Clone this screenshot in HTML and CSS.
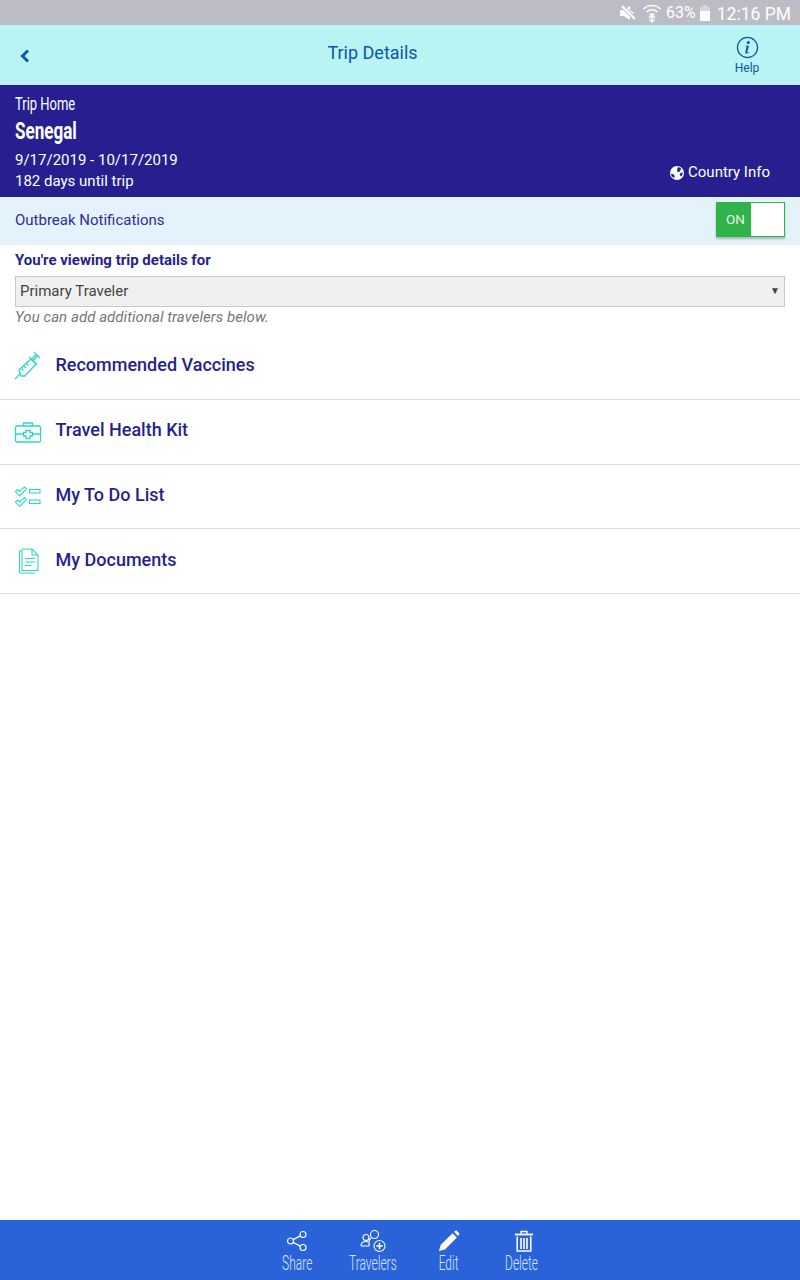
FILE: index.html
```html
<!DOCTYPE html>
<html>

<head>
    <meta name="viewport" content="width=device-width, initial-scale=1.0">
    <link rel="stylesheet" href="styles.css">
</head>

<body>
    <div class="statusbar">
        <svg class="st-mute" viewBox="0 0 18 16" width="18" height="16">
            <path d="M1 5h4l6-4v14l-6-4H1z" fill="#fff" />
            <path d="M11 5l4 3-4 3z" fill="#fff" />
            <path d="M2 0l15 15" stroke="#bdbcc4" stroke-width="4" />
            <path d="M3 1l13 13" stroke="#fff" stroke-width="2.200" />
        </svg>
        <svg class="st-wifi" viewBox="0 0 20 20" width="20" height="20" fill="none" stroke="#fff">
            <path d="M1.500 6a12 12 0 0 1 17 0" stroke-width="1.500" />
            <path d="M4.500 9a8 8 0 0 1 11 0" stroke-width="1.500" />
            <path d="M7.500 12a4 4 0 0 1 5 0" stroke-width="1.500" />
            <path d="M10 12.500v6M7 15l3-3 3 3M7.500 16.500l2.500 2.500 2.500-2.500" stroke-width="1.500" />
        </svg>
        <span class="st-pct">63%</span>
        <svg class="st-batt" viewBox="0 0 10 16" width="10" height="16">
            <path d="M3 0h4v2h3v14H0V2h3z" fill="#d6d6da" />
            <path d="M0 6h10v10H0z" fill="#fff" />
        </svg>
        <span class="st-time">12:16 PM</span>
    </div>

    <div class="topbar">
        <svg class="back" viewBox="0 0 10 14" width="10" height="14">
            <path d="M8 1.500L2.500 7 8 12.500" fill="none" stroke="#0b57a8" stroke-width="3" />
        </svg>
        <div class="topbar-title">Trip Details</div>
        <div class="help">
            <svg viewBox="0 0 24 24" width="23" height="23">
                <circle cx="12" cy="12" r="10.500" fill="none" stroke="#0b57a8" stroke-width="1.300" />
                <circle cx="12.800" cy="6.800" r="1.600" fill="#0b57a8" />
                <path d="M9.800 10.200h3.700l-1.700 6.600c-.1.500.3.600 1.900-.3l.2.500c-1.600 1.300-4.600 2.200-4.300.2l1.300-5.600c.1-.6-.3-.8-1.200-.8z" fill="#0b57a8" />
            </svg>
            <span>Help</span>
        </div>
    </div>

    <div class="trip">
        <div class="trip-home"><span class="narrow">Trip Home</span></div>
        <div class="trip-name"><span class="narrow">Senegal</span></div>
        <div class="trip-line">9/17/2019 - 10/17/2019</div>
        <div class="trip-bottom">
            <div class="trip-line">182 days until trip</div>
            <div class="country">
                <svg viewBox="0 0 16 16" width="14" height="14">
                    <circle cx="8" cy="8" r="8" fill="#fff" />
                    <path d="M9 1.500c1.500 0 3 .5 4 2l-1.500 1.500-1 2-2-.5-.5-2zM1 9c1 0 2.500 0 3.500 1s1 2.500.5 3.500C3 13 1.500 11 1 9zM12 8l2.500-.5c0 2-.7 3.500-2 4.500l-1.500-2z" fill="#271f8f" />
                </svg>
                <span>Country Info</span>
            </div>
        </div>
    </div>

    <div class="outbreak">
        <span>Outbreak Notifications</span>
        <div class="toggle">
            <div class="toggle-on">ON</div>
            <div class="toggle-knob"></div>
        </div>
    </div>

    <div class="viewing">
        <div class="viewing-label">You're viewing trip details for</div>
        <div class="picker">
            <span>Primary Traveler</span>
            <span class="picker-arrow">▼</span>
        </div>
        <div class="viewing-hint">You can add additional travelers below.</div>
    </div>

    <div class="menu">
        <div class="menu-row first">
            <svg viewBox="0 0 28 30" width="28" height="30" class="menu-icon" fill="none" stroke="#2fd6c8" stroke-width="1.300">
                <path d="M1 29l6-6" />
                <path d="M5 20l2 6 4 0 11-12-5-5z" />
                <path d="M7.500 18.500l2 2M10 16l2 2M12.500 13.500l2 2" />
                <path d="M15 7l8 8M19 11l4.500-5M17.500 9.500l4.500-5M20 2l6 6" />
            </svg>
            <span>Recommended Vaccines</span>
        </div>
        <div class="menu-row">
            <svg viewBox="0 0 28 22" width="28" height="22" class="menu-icon" fill="none" stroke="#2fd6c8" stroke-width="1.300">
                <rect x="1.500" y="5" width="25" height="16" rx="1.500" />
                <path d="M9.500 5V2h9v3" />
                <path d="M1.500 13h8M18.500 13h8" />
                <path d="M12 9.500h4V11.500h2.500v3.500H16v2.500h-4V15H9.500v-3.500H12z" />
            </svg>
            <span>Travel Health Kit</span>
        </div>
        <div class="menu-row short">
            <svg viewBox="0 0 28 22" width="28" height="22" class="menu-icon" fill="none" stroke="#2fd6c8" stroke-width="1.100">
                <path d="M1.500 5.500l2-2 2 2 5-4.500 2 2-7 7z" />
                <path d="M1.500 16l2-2 2 2 5-4.500 2 2-7 7z" />
                <rect x="15.500" y="3.500" width="10.500" height="3.500" />
                <rect x="15.500" y="14" width="10.500" height="3.500" />
            </svg>
            <span>My To Do List</span>
        </div>
        <div class="menu-row">
            <svg viewBox="0 0 28 26" width="28" height="26" class="menu-icon" fill="none" stroke="#2fd6c8" stroke-width="1.100">
                <path d="M8 3H5.500v20.500c0 1 .5 1.500 1.500 1.500h14" />
                <path d="M8 1h10l6 6v15.500H8z" />
                <path d="M18 1v6h6" />
                <path d="M11 10.500h10M11 14h10M11 17.500h6" />
            </svg>
            <span>My Documents</span>
        </div>
    </div>

    <div class="spacer"></div>

    <div class="footer">
        <div class="foot-item share">
            <svg viewBox="0 0 22 22" width="22" height="22" fill="none" stroke="#fff" stroke-width="1.200">
                <circle cx="17" cy="4.500" r="3" />
                <circle cx="4.500" cy="11" r="3" />
                <circle cx="17" cy="17.500" r="3" />
                <path d="M7.200 9.600l7.100-3.700M7.200 12.400l7.100 3.700" />
            </svg>
            <span class="narrow">Share</span>
        </div>
        <div class="foot-item travelers">
            <svg viewBox="0 0 26 24" width="26" height="24" fill="none" stroke="#fff" stroke-width="1.100">
                <circle cx="6" cy="8.500" r="3" />
                <path d="M1 17c0-3 2-4.500 5-4.500 1 0 2 .2 2.500.6M1 17h8" />
                <circle cx="14.500" cy="5.500" r="4" />
                <path d="M11 9c-2 2-2.500 5-1.500 8" />
                <circle cx="19.500" cy="17" r="5.500" />
                <path d="M19.500 13.800v6.400M16.300 17h6.400" stroke-width="1.500" />
            </svg>
            <span class="narrow">Travelers</span>
        </div>
        <div class="foot-item edit">
            <svg viewBox="0 0 22 22" width="22" height="22">
                <path d="M1 21l1.600-6L14.500 3.200l4.400 4.400L7 19.400z" fill="#fff" />
                <path d="M16 1.700l1.500-1c.5-.3 1-.3 1.500.2l2 2c.5.500.4 1 .1 1.500l-1.100 1.500z" fill="#fff" />
            </svg>
            <span class="narrow">Edit</span>
        </div>
        <div class="foot-item delete">
            <svg viewBox="0 0 20 22" width="20" height="22" fill="none" stroke="#fff">
                <path d="M1 4.500h18" stroke-width="1.800" />
                <path d="M7 4V1.500h6V4" stroke-width="1.300" />
                <path d="M3.200 6.500v14.500h13.600V6.500" stroke-width="1.500" />
                <path d="M7 8v11M10 8v11M13 8v11" stroke-width="1.600" />
            </svg>
            <span class="narrow">Delete</span>
        </div>
    </div>
</body>

</html>
```

FILE: styles.css
```css
* {
    box-sizing: border-box;
}

body {
    margin: 0;
    height: 1280px;
    display: flex;
    flex-direction: column;
    background-color: white;
    font-family: Roboto, "Liberation Sans", sans-serif;
    overflow: hidden;
}

/* no Oswald here, so squeeze Roboto sideways */
.narrow {
    display: inline-block;
    white-space: nowrap;
}

.statusbar {
    height: 25px;
    display: flex;
    align-items: center;
    justify-content: flex-end;
    padding-right: 9px;
    background-color: #bdbcc4;
    color: white;
}

.st-mute {
    margin-right: 5px;
}

.st-wifi {
    margin-right: 4px;
}

.st-pct {
    font-size: 16px;
    margin-right: 4px;
}

.st-batt {
    margin-right: 7px;
}

.st-time {
    font-size: 17.500px;
    position: relative;
    top: 1px;
}

.topbar {
    height: 60px;
    position: relative;
    display: flex;
    justify-content: center;
    background-color: #baf3f3;
    color: #0b57a8;
}

.back {
    position: absolute;
    left: 20px;
    top: 24px;
}

.topbar-title {
    font-size: 18px;
    line-height: 56px;
    padding-right: 55px;
}

.help {
    position: absolute;
    left: 727px;
    top: 11px;
    width: 40px;
    display: flex;
    flex-direction: column;
    align-items: center;
    font-size: 12px;
    line-height: 14px;
}

.help span {
    margin-top: 2px;
}

.trip {
    height: 112px;
    padding: 8px 30px 0 15px;
    background-color: #271f8f;
    color: white;
}

.trip-home {
    font-size: 18px;
    line-height: 22px;
}

.trip-home .narrow {
    transform: scaleX(0.72);
    transform-origin: left;
}

.trip-name {
    font-size: 24px;
    font-weight: bold;
    line-height: 33px;
    margin-bottom: 2px;
}

.trip-name .narrow {
    transform: scaleX(0.71);
    transform-origin: left;
}

.trip-line {
    font-size: 15px;
    line-height: 21px;
}

.trip-bottom {
    display: flex;
    justify-content: space-between;
    align-items: flex-start;
}

.country {
    display: flex;
    align-items: center;
    gap: 4px;
    font-size: 15px;
    line-height: 21px;
    margin-top: -9px;
}

.outbreak {
    height: 48px;
    display: flex;
    align-items: center;
    justify-content: space-between;
    padding: 0 15px 3px;
    background-color: #e3f2fb;
    color: #332c94;
    font-size: 15px;
}

.toggle {
    width: 69px;
    height: 35px;
    display: flex;
    border: 1px solid #2fb34a;
    box-shadow: 0 2px 2px rgba(0, 0, 0, 0.25);
}

.toggle-on {
    width: 34px;
    background-color: #2fb34a;
    color: #e8f7ea;
    font-size: 13.500px;
    line-height: 33px;
    padding-left: 9px;
}

.toggle-knob {
    flex: 1;
    background-color: white;
}

.viewing {
    padding: 7px 15px 0;
}

.viewing-label {
    color: #271f8f;
    font-size: 15px;
    font-weight: bold;
    line-height: 16px;
}

.picker {
    height: 31px;
    margin-top: 8px;
    display: flex;
    align-items: center;
    justify-content: space-between;
    padding: 0 4px 2px;
    background-color: #f0f0f0;
    border: 1px solid #c8c8c8;
    color: #444;
    font-size: 15px;
}

.picker-arrow {
    font-size: 10px;
}

.viewing-hint {
    color: #777;
    font-size: 15px;
    font-style: italic;
    letter-spacing: 0.05px;
    line-height: 20px;
}

.menu-row {
    height: 65px;
    display: flex;
    align-items: center;
    padding-left: 14px;
    border-bottom: 1px solid #dcdcdc;
    color: #271f8f;
    font-size: 18px;
    font-weight: 500;
}

.menu-row span {
    margin-bottom: 5px;
}

.menu-row.short {
    height: 64px;
}

.menu-row:last-child span {
    margin-bottom: 4px;
}

.menu-row.first {
    height: 73px;
    padding-top: 3px;
}

.menu-row.first span {
    margin-bottom: 0;
}

.menu-icon {
    margin-right: 13.500px;
    flex: none;
}

.spacer {
    flex: 1;
}

.footer {
    height: 60px;
    display: flex;
    justify-content: center;
    padding-left: 32px;
    background-color: #2962d9;
    color: #dbe8fb;
    font-size: 20px;
    font-weight: 300;
}

.foot-item {
    display: flex;
    flex-direction: column;
    align-items: center;
    line-height: 20px;
    padding-top: 9px;
}

.foot-item svg {
    display: block;
    height: 24px;
    flex: none;
}

.foot-item .narrow {
    transform: scaleX(0.6);
}

.delete svg {
    margin-left: 3px;
}

.share {
    width: 60px;
}

.travelers {
    width: 92px;
}

.edit {
    width: 60px;
}

.delete {
    width: 86px;
}
```
